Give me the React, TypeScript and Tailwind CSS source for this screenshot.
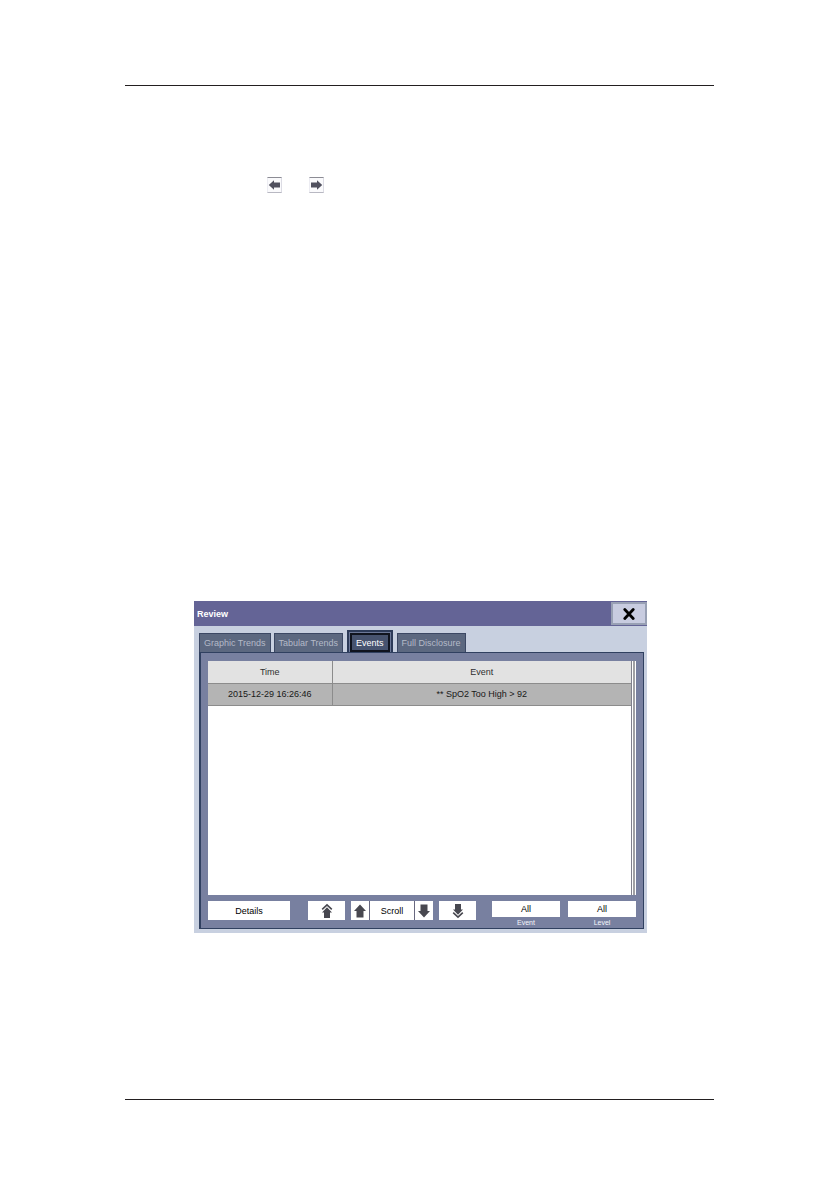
import React from "react";

const FONT = "font-['Liberation_Sans',Arial,sans-serif]";

function BlockArrow({ className, double = false }: { className: string; double?: boolean }) {
  return (
    <svg viewBox="0 0 14 16" className={className} fill="currentColor" aria-hidden="true">
      {double ? (
        <>
          <path d="M2.200 6.300 7 1.800l4.800 4.500" fill="none" stroke="currentColor" strokeWidth="1.6" />
          <path d="M7 4.300 12 9.500H10V15H4V9.500H2z" />
        </>
      ) : (
        <path d="M7 1.500 13 8H10.500V14.500h-7V8H1z" />
      )}
    </svg>
  );
}

function KeyIcon({ label, flip = false }: { label: string; flip?: boolean }) {
  return (
    <button
      aria-label={label}
      className="flex h-4 w-[15px] items-center justify-center border border-t-[#8c8c94] border-r-[#dcdce4] border-b-[#b8b8c2] border-l-[#ececf2] bg-[#fafafc] text-[#50505e]"
    >
      <svg viewBox="0 0 13 10" className={flip ? "h-[10px] w-[13px] shrink-0 rotate-180" : "h-[10px] w-[13px] shrink-0"} fill="currentColor" aria-hidden="true">
        <path d="M.8 5 6 .2v2.300h6v5H6v2.300z" />
      </svg>
    </button>
  );
}

function Tab({ label, active = false }: { label: string; active?: boolean }) {
  if (active) {
    return (
      <button
        role="tab"
        aria-selected="true"
        className="mx-px h-[22px] border-2 border-b-0 border-[#2c3a58] bg-[#6c7898] px-px pt-px"
      >
        <span className="flex h-[19px] items-center border-2 border-[#10141f] bg-[#47536f] px-1 text-white">{label}</span>
      </button>
    );
  }
  return (
    <button
      role="tab"
      aria-selected="false"
      className="h-[19px] border border-b-0 border-[#3c4864] bg-[#5c6880] px-1 text-[#b4bac8]"
    >
      {label}
    </button>
  );
}

function Filter({ id, label }: { id: string; label: string }) {
  return (
    <div className="flex w-[68px] flex-col items-center">
      <select
        id={id}
        className="h-4 w-full appearance-none rounded-none bg-white text-center leading-4 text-black [text-align-last:center]"
      >
        <option>All</option>
      </select>
      <label htmlFor={id} className="pt-px text-[7px] leading-[10px] text-[#f4f6fc]">
        {label}
      </label>
    </div>
  );
}

const events = [{ time: "2015-12-29 16:26:46", event: "** SpO2 Too High > 92" }];

export default function App() {
  return (
    <main className={`flex min-h-screen flex-col bg-white px-[125px] pt-[85px] pb-[90px] text-[9px] leading-3 ${FONT}`}>
      <hr className="mr-px border-[#231f20]" />

      <div className="mt-[91px] ml-[142px] flex gap-[27px]">
        <KeyIcon label="Previous" />
        <KeyIcon label="Next" flip />
      </div>

      <section aria-label="Review" className="mt-[408px] mr-[68px] ml-[69px] bg-[#c8d0e0]">
        <header className="flex h-[25px] items-center justify-between bg-[#646496] pl-[3px]">
          <h1 className="font-bold text-white">Review</h1>
          <button
            aria-label="Close"
            className="flex h-[23px] w-9 items-center justify-center border-2 border-[#98a0b4] bg-[#c8cce0] text-black"
          >
            <svg viewBox="0 0 12 12" className="size-3" fill="none" stroke="currentColor" strokeWidth="2.8" strokeLinecap="round" aria-hidden="true">
              <path d="M1.800 1.500l8.400 9M10.200 1.500l-8.400 9" />
            </svg>
          </button>
        </header>

        <div className="pt-1 pr-[3px] pb-1 pl-[5px]">
          <div role="tablist" className="flex items-end gap-[3px]">
            <Tab label="Graphic Trends" />
            <Tab label="Tabular Trends" />
            <Tab label="Events" active />
            <Tab label="Full Disclosure" />
          </div>

          <div className="border border-l-2 border-[#304060] bg-[#7880a0] pt-2 pr-[7px] pl-[7px]">
            <div className="flex h-[234px]">
              <div className="grow bg-white">
                <table className="w-full table-fixed border-collapse text-center">
                  <thead>
                    <tr className="h-[22px] bg-[#e2e2e2] text-[#303030]">
                      <th className="w-[124px] border-r border-b border-[#8c8c8c] font-normal">Time</th>
                      <th className="border-b border-[#8c8c8c] font-normal">Event</th>
                    </tr>
                  </thead>
                  <tbody>
                    {events.map((row) => (
                      <tr key={row.time} className="h-[22px] bg-[#b4b4b4] text-[#181818]">
                        <td className="border-r border-b border-[#8c8c8c]">{row.time}</td>
                        <td className="border-b border-[#8c8c8c]">{row.event}</td>
                      </tr>
                    ))}
                  </tbody>
                </table>
              </div>
              <div className="flex w-[5px] shrink-0 border-l border-[#80808c] bg-white px-px">
                <div className="grow bg-[#a0a0a4]" />
              </div>
            </div>

            <div className="mt-[6px] flex items-start justify-between text-black">
              <button className="h-[19px] w-[82px] bg-white">Details</button>
              <div className="ml-[2px] flex gap-[6px] text-[#484850]">
                <button aria-label="First page" className="flex h-[19px] w-[37px] items-center justify-center bg-white">
                  <BlockArrow className="h-4 w-[14px]" double />
                </button>
                <div className="flex h-[19px] items-stretch">
                  <button aria-label="Scroll up" className="flex w-[18px] items-center justify-center bg-white">
                    <BlockArrow className="h-4 w-[14px]" />
                  </button>
                  <span className="flex w-[46px] items-center justify-center border-x border-[#686880] bg-white text-black">
                    Scroll
                  </span>
                  <button aria-label="Scroll down" className="flex w-[18px] items-center justify-center bg-white">
                    <BlockArrow className="h-4 w-[14px] rotate-180" />
                  </button>
                </div>
                <button aria-label="Last page" className="flex h-[19px] w-[37px] items-center justify-center bg-white">
                  <BlockArrow className="h-4 w-[14px] rotate-180" double />
                </button>
              </div>
              <div className="flex gap-2">
                <Filter id="event-filter" label="Event" />
                <Filter id="level-filter" label="Level" />
              </div>
            </div>
          </div>
        </div>
      </section>

      <hr className="mt-auto mr-px border-[#231f20]" />
    </main>
  );
}
